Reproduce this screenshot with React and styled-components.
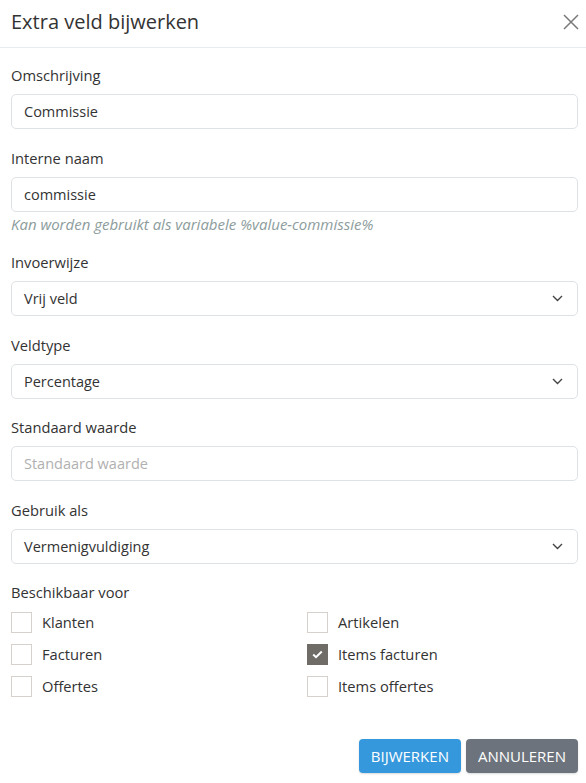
import styled, { createGlobalStyle } from "styled-components"

const GlobalStyle = createGlobalStyle`
  * { box-sizing: border-box; }
  body {
    margin: 0;
    background: #ffffff;
    font-family: "Open Sans", "Noto Sans", sans-serif;
    color: #333333;
  }
`

const fields = [
  { label: "Omschrijving", value: "Commissie" },
  { label: "Interne naam", value: "commissie", help: "Kan worden gebruikt als variabele %value-commissie%" },
  { label: "Invoerwijze", value: "Vrij veld", select: true },
  { label: "Veldtype", value: "Percentage", select: true },
  { label: "Standaard waarde", placeholder: "Standaard waarde" },
  { label: "Gebruik als", value: "Vermenigvuldiging", select: true },
]

const options = [
  { name: "Klanten" },
  { name: "Artikelen" },
  { name: "Facturen" },
  { name: "Items facturen", checked: true },
  { name: "Offertes" },
  { name: "Items offertes" },
]

export default function App() {
  return (
    <>
      <GlobalStyle />
      <Modal>
        <Header>
          <Title>Extra veld bijwerken</Title>
          <CloseButton aria-label="Sluiten">
            <svg width="16" height="16" viewBox="0 0 16 16">
              <path d="M1 1 L15 15 M15 1 L1 15" stroke="#7a7a7a" strokeWidth="1.5" fill="none" />
            </svg>
          </CloseButton>
        </Header>

        <Body>
          {fields.map((f) => (
            <Group key={f.label}>
              <Label>{f.label}</Label>
              <Control>
                {f.value ? <span>{f.value}</span> : <Placeholder>{f.placeholder}</Placeholder>}
                {f.select && (
                  <svg width="11" height="7" viewBox="0 0 11 7">
                    <path d="M1 1 L5.5 5.5 L10 1" stroke="#444" strokeWidth="1.4" fill="none" />
                  </svg>
                )}
              </Control>
              {f.help && <Help>{f.help}</Help>}
            </Group>
          ))}

          <Label>Beschikbaar voor</Label>
          <CheckGrid>
            {options.map((o) => (
              <CheckRow key={o.name}>
                <Box $checked={o.checked}>
                  {o.checked && (
                    <svg width="11" height="9" viewBox="0 0 11 9">
                      <path d="M1.2 4.6 L4 7.2 L9.8 1.5" stroke="#fff" strokeWidth="2" fill="none" />
                    </svg>
                  )}
                </Box>
                {o.name}
              </CheckRow>
            ))}
          </CheckGrid>
        </Body>

        <Footer>
          <Button $variant="primary">BIJWERKEN</Button>
          <Button>ANNULEREN</Button>
        </Footer>
      </Modal>
    </>
  )
}

const Modal = styled.div`
  width: 586px;
  min-height: 783px;
  display: flex;
  flex-direction: column;
`

const Header = styled.div`
  height: 48px;
  display: flex;
  align-items: center;
  justify-content: space-between;
  padding: 0 6px 4px 11px;
  border-bottom: 1px solid #e9ecef;
`

const Title = styled.h4`
  margin: 0;
  font-size: 20px;
  font-weight: 400;
  color: #333;
`

const CloseButton = styled.button`
  border: none;
  background: none;
  padding: 0;
  width: 18px;
  height: 18px;
  display: flex;
  align-items: center;
  justify-content: center;
  cursor: pointer;
`

const Body = styled.div`
  padding: 17px 8px 0 11px;
  display: flex;
  flex-direction: column;
`

const Group = styled.div`
  display: flex;
  flex-direction: column;
  margin-bottom: 18.5px;
`

const Label = styled.label`
  font-size: 14.7px;
  line-height: 20px;
  color: #333;
`

const Control = styled.div`
  margin-top: 9px;
  height: 35px;
  border: 1px solid #dee2e6;
  border-radius: 5px;
  display: flex;
  align-items: center;
  justify-content: space-between;
  padding: 0 14px 0 12px;
  font-size: 14.5px;
  color: #333;
`

const Placeholder = styled.span`
  color: #b0b0b0;
`

const Help = styled.div`
  margin-top: 2px;
  font-size: 15px;
  line-height: 20px;
  font-style: italic;
  color: #8c9c9c;
`

const CheckGrid = styled.div`
  margin-top: 4px;
  display: grid;
  grid-template-columns: 296px 1fr;
  grid-auto-rows: 32px;
`

const CheckRow = styled.label`
  display: flex;
  align-items: center;
  gap: 10px;
  font-size: 14.7px;
  color: #333;
`

const Box = styled.span`
  width: 21px;
  height: 21px;
  border: 1px solid ${(p) => (p.$checked ? "#6f6c68" : "#d6d1cd")};
  background: ${(p) => (p.$checked ? "#6f6c68" : "#fff")};
  display: flex;
  align-items: center;
  justify-content: center;
`

const Footer = styled.div`
  margin-top: auto;
  display: flex;
  justify-content: flex-end;
  gap: 5px;
  padding: 0 8px 10px 11px;
`

const Button = styled.button`
  height: 34px;
  padding: 0 12px;
  border: none;
  border-radius: 4px;
  background: ${(p) => (p.$variant === "primary" ? "#3598dc" : "#6c737c")};
  color: #fff;
  font-family: "Open Sans", "Noto Sans", sans-serif;
  font-size: 15px;
  box-shadow: 0 1px 2px rgba(0, 0, 0, 0.15);
  cursor: pointer;
`
